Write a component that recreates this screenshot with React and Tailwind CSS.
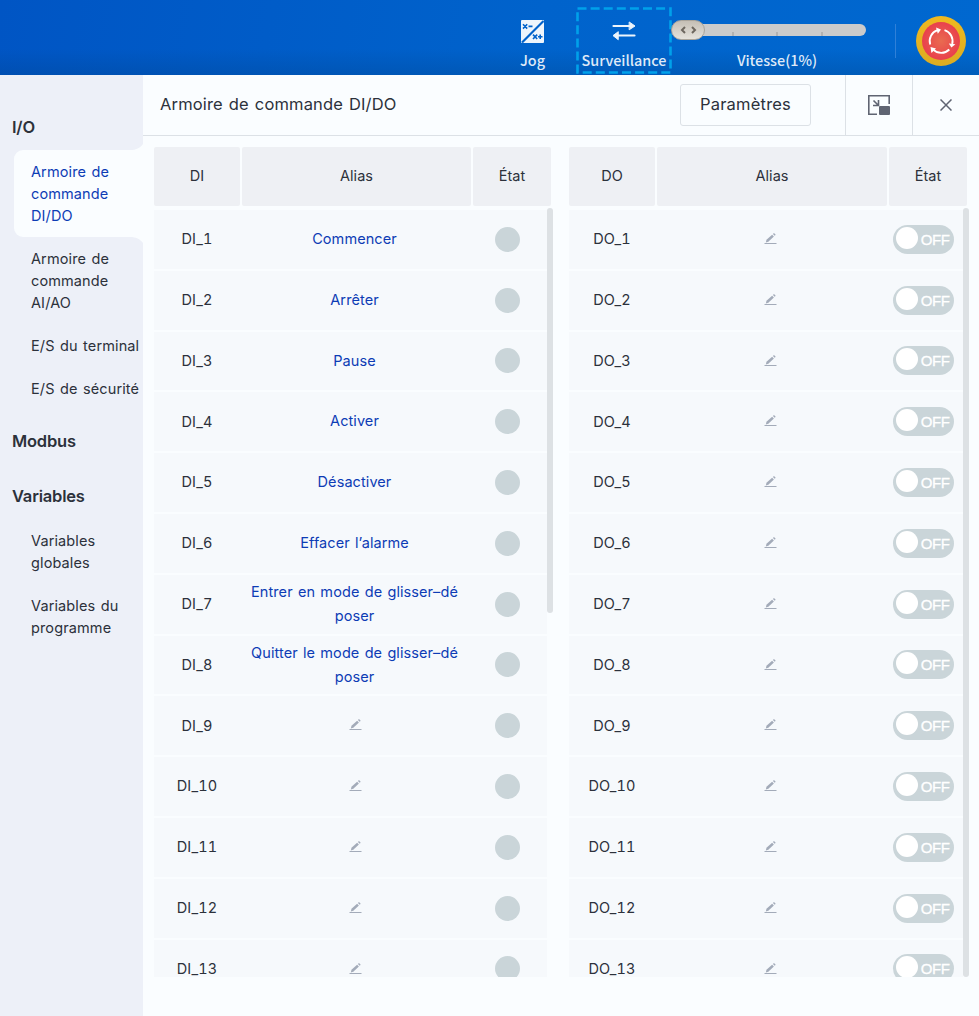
function Pencil() {
  return (
    <svg width="13" height="12" viewBox="0 0 13 12" className="block text-[#a3abb9]">
      <path d="M0.5 10.5H12.5" stroke="currentColor" strokeWidth="1" />
      <path d="M1.8 9.4L2.5 6.8L8.1 1.7L9.9 3.5L4.3 8.8Z" fill="currentColor" />
      <path d="M8.9 1L10 0.1L11.7 1.8L10.7 2.8Z" fill="currentColor" />
    </svg>
  );
}

function Toggle() {
  return (
    <div className="mr-[1.5px] flex h-[29px] w-[61px] items-center rounded-full bg-[#cad5d9] pl-[3px]">
      <span className="mb-[3px] block size-[22px] shrink-0 rounded-full bg-white" />
      <span className="ml-[3px] font-['Liberation_Sans',sans-serif] text-[15px] leading-none tracking-[-0.4px] text-white [-webkit-text-stroke:0.3px_white] [word-spacing:0]">OFF</span>
    </div>
  );
}

function HeadCell({ children, className }) {
  return <div className={`flex h-[59px] items-center justify-center rounded-[2px] bg-[#eef0f4] pb-[2px] ${className}`}>{children}</div>;
}

const aliases = [
  "Commencer",
  "Arrêter",
  "Pause",
  "Activer",
  "Désactiver",
  "Effacer l’alarme",
  "Entrer en mode de glisser–dé\nposer",
  "Quitter le mode de glisser–dé\nposer",
];

function IoTable({ kind, thumb, className }) {
  const output = kind === "DO";
  return (
    <section className={`shrink-0 text-[14.5px] tracking-[0.08px] [word-spacing:1.1px] ${className}`}>
      <div className="flex gap-[2px]">
        <HeadCell className="w-[86px]">{kind}</HeadCell>
        <HeadCell className="flex-1">Alias</HeadCell>
        <HeadCell className="w-[78px]">État</HeadCell>
      </div>
      <div className="mr-[-2px] mt-[2px] flex h-[769px]">
        <div className="mt-[2px] h-[767px] min-w-0 flex-1 overflow-hidden">
          {Array.from({ length: 13 }, (_, i) => (
            <div key={i} className="mb-[2px] flex h-[58.8px] items-center gap-[2px] bg-[#f6f9fc]">
              <div className="w-[86px] pb-[0.7px] text-center tabular-nums tracking-[0.15px]">{`${kind}_${i + 1}`}</div>
              <div className="flex flex-1 justify-center whitespace-pre pb-[0.6px] text-center leading-6 text-[#0d3cb5]">
                {!output && aliases[i] ? aliases[i] : <span className="ml-[1px]"><Pencil /></span>}
              </div>
              <div className="flex w-[78px] justify-center">
                {output ? <Toggle /> : <span className="mr-[1px] block size-[25px] rounded-full bg-[#cad5d9]" />}
              </div>
            </div>
          ))}
        </div>
        <div className={`w-[6px] rounded-[3px] bg-[#dde1e4] ${thumb}`} />
      </div>
    </section>
  );
}

function Group({ children, className = "pt-[20px]" }) {
  return <h2 className={`h-[55px] pl-3 text-[16.5px] font-semibold leading-[22px] tracking-[-0.2px] ${className}`}>{children}</h2>;
}

function Item({ children }) {
  return <div className="whitespace-pre pb-[10.5px] pl-[31px] pt-[10.5px] leading-[22px]">{children}</div>;
}

function Sidebar() {
  return (
    <nav className="w-[143px] shrink-0 bg-[#edf0f8] pt-5 text-[14.5px] tracking-[0.12px] [word-spacing:1.2px]">
      <Group className="pt-[21px]">I/O</Group>
      <div className="relative ml-[14px] h-[87px] whitespace-pre rounded-l-[9px] bg-[#fafdff] pl-[17px] pt-[10.5px] leading-[22px] text-[#0d3cb5]">
        {"Armoire de\ncommande\nDI/DO"}
        <svg className="absolute -top-[6px] right-0" width="13" height="6" viewBox="0 0 13 6"><path d="M0 6C6 6 10 4 13 0V6Z" fill="#fafdff" /></svg>
        <svg className="absolute -bottom-[6px] right-0" width="13" height="6" viewBox="0 0 13 6"><path d="M0 0C6 0 10 2 13 6V0Z" fill="#fafdff" /></svg>
      </div>
      <Item>{"Armoire de\ncommande\nAI/AO"}</Item>
      <Item>E/S du terminal</Item>
      <Item>E/S de sécurité</Item>
      <div className="-mt-[0.5px]">
        <Group>Modbus</Group>
        <Group>Variables</Group>
        <Item>{"Variables\nglobales"}</Item>
        <Item>{"Variables du\nprogramme"}</Item>
      </div>
    </nav>
  );
}

function JogIcon() {
  return (
    <svg width="23" height="23" viewBox="0 0 23 23">
      <rect width="23" height="23" rx="1" fill="#eef5fc" />
      <path d="M1 22.5L22.5 1" stroke="#0062cb" strokeWidth="2.2" />
      <path d="M2 4.2L6.2 8.6M6.2 4.2L2 8.6M7.5 6.4H11.5M12 14.6L16.2 19M16.2 14.6L12 19M17 16.8H21.5M19.2 14.6V19" stroke="#0062cb" strokeWidth="1.6" />
    </svg>
  );
}

function SwapIcon() {
  return (
    <svg width="24" height="20" viewBox="0 0 24 20" stroke="#eef5fc" strokeWidth="2.2" strokeLinecap="round" strokeLinejoin="round" fill="#eef5fc">
      <path d="M1.5 5H20M3 14.5H22.5" />
      <path d="M17.5 1.2L23 5L17.5 8.6ZM6 10.9L1 14.6L6 18.5Z" strokeWidth="1" />
    </svg>
  );
}

function EmergencyStop() {
  return (
    <svg width="50" height="50" viewBox="0 0 50 50">
      <defs>
        <radialGradient id="red"><stop offset="0" stopColor="#e96b50" /><stop offset="1" stopColor="#e9404d" /></radialGradient>
        <linearGradient id="yellow" x2="0" y2="1"><stop offset="0" stopColor="#f0b920" /><stop offset="1" stopColor="#dbac22" /></linearGradient>
      </defs>
      <circle cx="25" cy="25" r="25" fill="url(#yellow)" />
      <circle cx="25" cy="25" r="19" fill="url(#red)" />
      <g fill="none" stroke="#fff" strokeWidth="1.9">
        <path d="M14.2 28.5A11.5 11.5 0 0 1 21.5 14.2" />
        <path d="M28.5 14.1A11.5 11.5 0 0 1 36.2 28" />
        <path d="M33.3 33.5A11.5 11.5 0 0 1 17.2 33.6" />
      </g>
      <g fill="#fff">
        <path d="M20 11.4L25 13.6L21.8 17.8Z" />
        <path d="M32.8 27.4L39.4 28.2L35.4 31.6Z" />
        <path d="M14.5 31.1L20 32.5L15.4 37Z" />
      </g>
    </svg>
  );
}

function TopBar() {
  return (
    <header className="flex h-[75px] shrink-0 bg-[linear-gradient(to_bottom,transparent_65%,#003c7a40_100%),linear-gradient(100deg,#0055c4_0%,#0063cc_55%,#0068d0_100%)] font-['Noto_Sans_CJK_SC',sans-serif] text-[14.4px] font-medium leading-[22px] text-[#dfe9f7]">
      <div className="ml-[508px] flex w-[49px] flex-col items-center pt-[20px]">
        <JogIcon />
        <span className="mt-[6px]">Jog</span>
      </div>
      <div className="relative ml-[19px] mt-[7px] flex h-[67px] w-[96px] flex-col items-center pt-[14px]">
        <svg className="absolute left-0 top-0" width="96" height="67" fill="none">
          <rect x="1.5" y="1.5" width="93" height="64" stroke="#00a1ea" strokeWidth="2.6" strokeDasharray="9 4.1" />
        </svg>
        <SwapIcon />
        <span className="mt-[8px]">Surveillance</span>
      </div>
      <div className="flex w-[194px] flex-col items-center pt-[20px]">
        <div className="-ml-px flex h-5 w-[195px] items-center">
          <div className="z-10 flex h-5 w-[34px] shrink-0 items-center justify-center rounded-full border border-[#a9a49b] bg-linear-to-b from-[#c5bfb5] to-[#e5e2dc]">
            <svg width="17" height="8" viewBox="0 0 17 8" fill="none" stroke="#6d675f" strokeWidth="2"><path d="M5 1L2 4L5 7M12 1L15 4L12 7" /></svg>
          </div>
          <div className="-ml-3 flex h-3 flex-1 items-end rounded-r-full bg-[#cbcbcb]">
            <i className="ml-[39px] h-1 w-[2px] bg-[#b2b2b2]" />
            <i className="ml-[42px] h-1 w-[2px] bg-[#b2b2b2]" />
            <i className="ml-[43px] h-1 w-[2px] bg-[#b2b2b2]" />
          </div>
        </div>
        <span className="ml-[16px] mt-[9px]">Vitesse(1%)</span>
      </div>
      <div className="ml-[29px] mt-6 h-[34px] w-px bg-[#2f80d8]" />
      <div className="ml-[20px] mt-[16px]"><EmergencyStop /></div>
    </header>
  );
}

export default function App() {
  return (
    <div className="flex h-[1016px] w-[979px] flex-col overflow-hidden bg-[#fafdff] font-['Inter','Noto_Sans_CJK_SC',sans-serif] text-[#2c313b]">
      <TopBar />
      <div className="flex min-h-0 flex-1">
        <Sidebar />
        <main className="min-w-0 flex-1">
          <div className="flex h-[61px] items-center border-b border-[#dce1e6] text-[16.5px]">
            <h1 className="flex-1 pb-[2px] pl-[17px] tracking-[0.15px] [word-spacing:1.2px]">Armoire de commande DI/DO</h1>
            <button className="mr-[34px] h-[42px] w-[131px] rounded-[3px] border border-[#dce1e6] pb-[2px] tracking-[0.2px]">Paramètres</button>
            <div className="flex h-full w-[67px] items-center justify-center border-l border-[#dce1e6]">
              <svg width="22" height="20" viewBox="0 0 22 20" fill="none" stroke="#5f6472" strokeWidth="1.6">
                <path d="M21.2 9V0.8H0.8V19.2H9" />
                <path d="M5.5 5.5L10 10M10.5 5V10.5H5" />
                <rect x="11" y="11" width="11" height="9" rx="1" fill="#5f6472" stroke="none" />
              </svg>
            </div>
            <div className="flex h-full w-[67px] items-center justify-center border-l border-[#dce1e6]">
              <svg width="12" height="12" viewBox="0 0 12 12" stroke="#5f6472" strokeWidth="1.5"><path d="M0.5 0.5L11.5 11.5M11.5 0.5L0.5 11.5" /></svg>
            </div>
          </div>
          <div className="flex pl-[11px] pt-[11px]">
            <IoTable kind="DI" className="w-[397px]" thumb="h-[405px]" />
            <IoTable kind="DO" className="ml-[18px] w-[398px]" thumb="h-[769px]" />
          </div>
        </main>
      </div>
    </div>
  );
}
